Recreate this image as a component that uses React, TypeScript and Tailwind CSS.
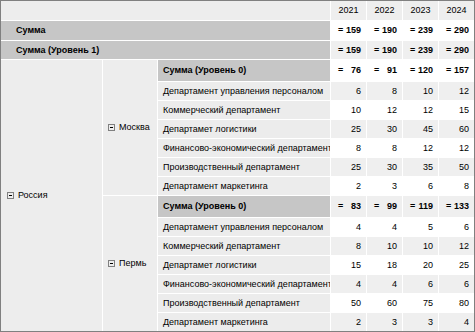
const years = ['2021', '2022', '2023', '2024'];

const departments = [
  'Департамент управления персоналом',
  'Коммерческий департамент',
  'Департамет логистики',
  'Финансово-экономический департамент',
  'Производственный департамент',
  'Департамент маркетинга',
];

const cities = [
  {
    name: 'Москва',
    rows: [
      [6, 8, 10, 12],
      [10, 12, 12, 15],
      [25, 30, 45, 60],
      [8, 8, 12, 12],
      [25, 30, 35, 50],
      [2, 3, 6, 8],
    ],
  },
  {
    name: 'Пермь',
    rows: [
      [4, 4, 5, 6],
      [8, 10, 10, 12],
      [15, 18, 20, 25],
      [4, 4, 6, 6],
      [50, 60, 75, 80],
      [2, 3, 3, 4],
    ],
  },
];

const sumOf = (rows: number[][]) => years.map((_, i) => rows.reduce((s, r) => s + r[i], 0));

function MinusBox() {
  return (
    <span className="w-[7px] h-[7px] border border-[#808080] flex items-center justify-center shrink-0">
      <span className="w-[3px] h-px bg-black" />
    </span>
  );
}

function SumCells({ values, striped }: { values: number[]; striped: boolean }) {
  return (
    <>
      {values.map((v, i) => (
        <div
          key={i}
          className={`${striped ? 'bg-[#efefef]' : 'bg-white'} flex items-center justify-between pl-[7px] pr-[5px] font-bold`}
        >
          <span>=</span>
          <span>{v}</span>
        </div>
      ))}
    </>
  );
}

function ValueCells({ values, striped }: { values: number[]; striped: boolean }) {
  return (
    <>
      {values.map((v, i) => (
        <div
          key={i}
          className={`${striped ? 'bg-[#efefef]' : 'bg-white'} flex items-center justify-end pr-[5px]`}
        >
          {v}
        </div>
      ))}
    </>
  );
}

export default function App() {
  const total = sumOf(cities.flatMap(c => c.rows));
  let rowIndex = 2;

  return (
    <div
      className="w-[475px] h-[332px] border border-[#808080] bg-white text-black text-[9px] leading-none overflow-hidden"
      style={{ fontFamily: '"Liberation Sans", Arial, sans-serif' }}
    >
      <div className="grid gap-px grid-cols-[101px_54px_172px_35px_35px_35px_35px] grid-rows-[19px_19px_18px_21px_repeat(6,18px)_21px_repeat(6,18px)]">
        {/* Header */}
        <div className="col-span-3 bg-[#ededed]" />
        {years.map(y => (
          <div key={y} className="bg-[#eeeeee] flex items-center justify-center">
            {y}
          </div>
        ))}

        {/* Total */}
        <div className="col-span-3 bg-[#c6c6c6] flex items-center pl-[15px] font-bold">Сумма</div>
        <SumCells values={total} striped={false} />

        <div className="col-span-3 bg-[#c6c6c6] flex items-center pl-[15px] font-bold">Сумма (Уровень 1)</div>
        <SumCells values={total} striped />

        {/* Russia */}
        <div className="row-span-14 bg-[#ededed] flex items-center gap-[4px] pl-[6px]">
          <MinusBox />
          <span>Россия</span>
        </div>

        {cities.map(city => {
          const sumStriped = rowIndex % 2 === 1;
          rowIndex++;
          return (
            <div key={city.name} className="contents">
              <div className="row-span-7 bg-[#ededed] flex items-center gap-[4px] pl-[5px]">
                <MinusBox />
                <span>{city.name}</span>
              </div>
              <div className="bg-[#c6c6c6] flex items-center pl-[5px] font-bold">Сумма (Уровень 0)</div>
              <SumCells values={sumOf(city.rows)} striped={sumStriped} />
              {city.rows.map((row, i) => {
                const striped = rowIndex % 2 === 1;
                rowIndex++;
                return (
                  <div key={i} className="contents">
                    <div className="bg-[#ececec] flex items-center pl-[5px] whitespace-nowrap overflow-hidden">
                      {departments[i]}
                    </div>
                    <ValueCells values={row} striped={striped} />
                  </div>
                );
              })}
            </div>
          );
        })}
      </div>
    </div>
  );
}
